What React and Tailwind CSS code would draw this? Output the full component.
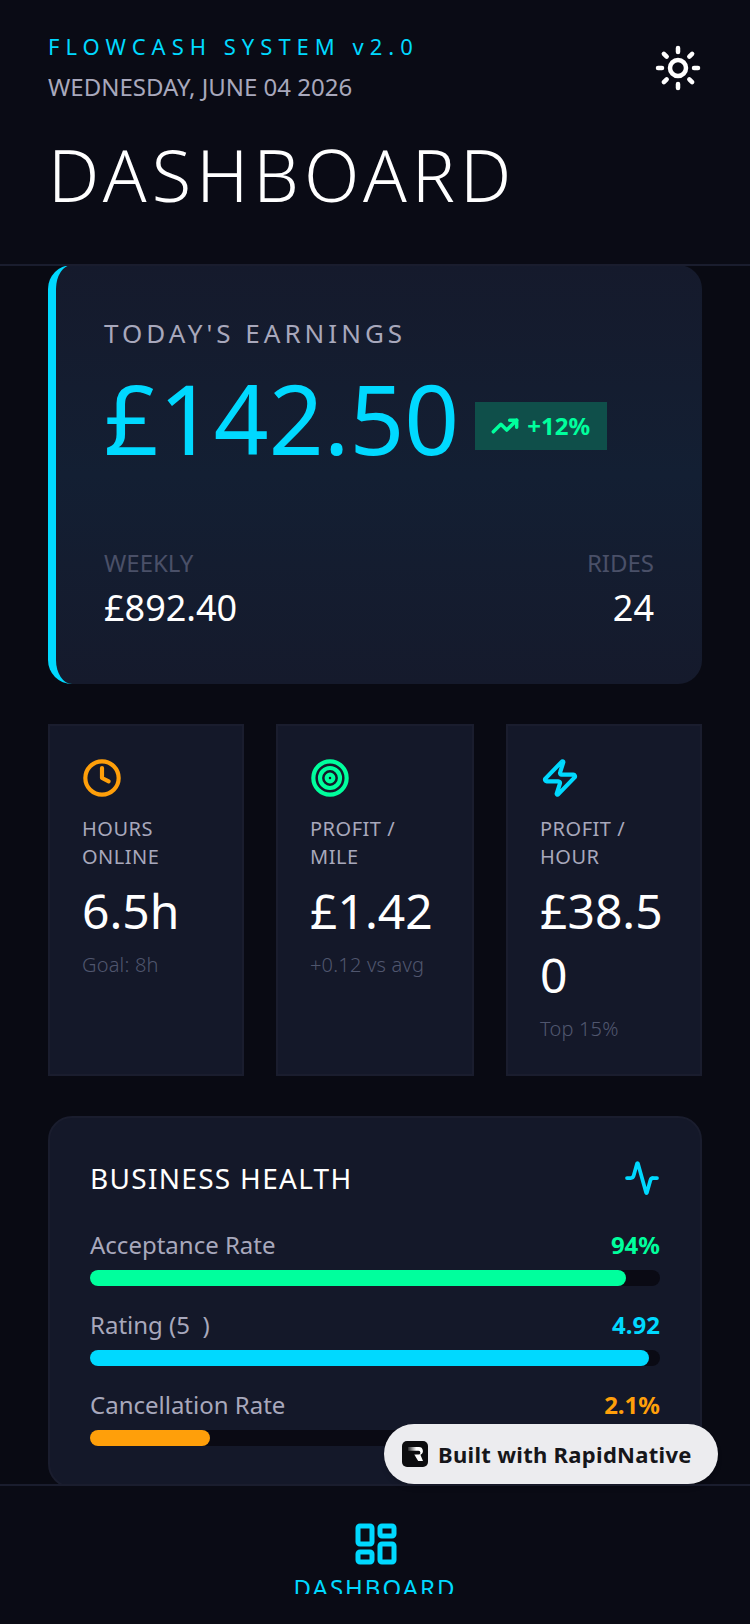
import React from 'react'
import { Sun, TrendingUp, Clock, Target, Zap, Activity, LayoutDashboard } from 'lucide-react'

const stats = [
    { Icon: Clock, color: 'text-[#ff9f0a]', label: 'HOURS ONLINE', value: '6.5h', sub: 'Goal: 8h', width: 'w-[196px]' },
    { Icon: Target, color: 'text-[#00ff9d]', label: 'PROFIT / MILE', value: '£1.42', sub: '+0.12 vs avg', width: 'w-[198px]' },
    { Icon: Zap, color: 'text-[#00d9ff]', label: 'PROFIT / HOUR', value: '£38.50', sub: 'Top 15%', width: 'w-[196px]' },
]

const metrics = [
    { label: 'Acceptance Rate', value: '94%', text: 'text-[#00ff9d]', bar: 'bg-[#00ff9d] w-[94%]' },
    { label: 'Rating (5\u00a0\u00a0)', value: '4.92', text: 'text-[#00d9ff]', bar: 'bg-[#00d9ff] w-[98%]' },
    { label: 'Cancellation Rate', value: '2.1%', text: 'text-[#ff9f0a]', bar: 'bg-[#ff9f0a] w-[21%]' },
]

const App = () => {
    return (
        <div className="relative flex h-[1624px] w-[750px] flex-col overflow-hidden bg-[#090a13] font-['Noto_Sans',sans-serif]">
            <header className="h-[266px] shrink-0 border-b-2 border-[#1a1d2e] bg-[#0a0b15] px-12 pt-[28px]">
                <div className="flex items-start justify-between">
                    <div>
                        <p className="text-[22px] leading-[36px] tracking-[6px] text-[#00d9ff]">FLOWCASH SYSTEM v2.0</p>
                        <p className="mt-[5px] text-[24px] leading-[36px] text-[#a8a8bc]">WEDNESDAY, JUNE 04 2026</p>
                    </div>
                    <Sun size={48} strokeWidth={2.25} className="mt-[16px] text-white" />
                </div>
                <h1 className="mt-[21px] text-[72px] leading-[96px] tracking-[5.1px] text-white font-light">DASHBOARD</h1>
            </header>

            <main className="flex-1 overflow-hidden px-12">
                <section className="-mt-[1px] h-[419px] rounded-3xl border-l-8 border-[#00d9ff] bg-linear-to-b from-[#151a2c] via-[#131f33] to-[#151a2c] p-12 pt-[48px]">
                    <p className="text-[26px] leading-[40px] tracking-[4px] text-[#a8a8bc]">TODAY'S EARNINGS</p>
                    <div className="mt-[9px] flex items-center gap-[16px]">
                        <span className="text-[96px] leading-[112px] text-[#00d9ff]">£142.50</span>
                        <div className="mt-[16px] flex h-[48px] w-[132px] items-center gap-[8px] bg-[#0f4f4a] px-4">
                            <TrendingUp size={28} strokeWidth={3} className="text-[#00ff9d]" />
                            <span className="text-[24px] font-bold text-[#00ff9d]">+12%</span>
                        </div>
                    </div>
                    <div className="mt-[71px] flex justify-between">
                        <div>
                            <p className="text-[24px] leading-[36px] text-[#4a5068]">WEEKLY</p>
                            <p className="mt-[3px] text-[36px] leading-[48px] text-white">£892.40</p>
                        </div>
                        <div className="text-right">
                            <p className="text-[24px] leading-[36px] text-[#4a5068]">RIDES</p>
                            <p className="mt-[3px] text-[36px] leading-[48px] text-white">24</p>
                        </div>
                    </div>
                </section>

                <section className="mt-[40px] flex gap-[32px]">
                    {stats.map(({ Icon, color, label, value, sub, width }) => (
                        <div key={label} className={`${width} h-[352px] border-2 border-[#1a1d2e] bg-[#141829] px-8 pt-8`}>
                            <Icon size={40} strokeWidth={2.5} className={color} />
                            <p className="mt-[17px] text-[20px] leading-[28px] tracking-[0.5px] text-[#a8a8bc]">{label}</p>
                            <p className="mt-[8px] text-[48px] leading-[64px] break-all text-white">{value}</p>
                            <p className="mt-[8px] text-[20px] leading-[28px] tracking-[0.2px] text-[#50566e] font-light">{sub}</p>
                        </div>
                    ))}
                </section>

                <section className="mt-[40px] h-[372px] rounded-3xl border-2 border-[#1a1d2e] bg-[#141829] px-[40px] pt-[40px]">
                    <div className="flex items-center justify-between">
                        <h2 className="text-[28px] leading-[40px] tracking-[1.3px] text-white">BUSINESS HEALTH</h2>
                        <Activity size={36} strokeWidth={2.5} className="text-[#00d9ff]" />
                    </div>
                    <div className="mt-[29px] flex flex-col gap-[21px]">
                        {metrics.map((m) => (
                            <div key={m.label}>
                                <div className="flex items-center justify-between">
                                    <span className="text-[24px] leading-[36px] text-[#a8a8bc]">{m.label}</span>
                                    <span className={`text-[24px] leading-[36px] font-bold ${m.text}`}>{m.value}</span>
                                </div>
                                <div className="mt-[7px] h-[16px] rounded-full bg-[#0a0a14]">
                                    <div className={`h-full rounded-full ${m.bar}`} />
                                </div>
                            </div>
                        ))}
                    </div>
                </section>
            </main>

            <footer className="flex h-[140px] shrink-0 flex-col items-center border-t-2 border-[#1a1d2e] bg-[#0a0b15] pt-[34px]">
                <LayoutDashboard size={48} strokeWidth={2.5} className="ml-[2px] text-[#00d9ff]" />
                <div className="mt-[4px] h-[22px] overflow-hidden">
                    <p className="text-[24px] leading-[32px] tracking-[2px] text-[#00d9ff]">DASHBOARD</p>
                </div>
            </footer>

            <div className="absolute top-[1424px] left-[384px] flex h-[60px] w-[334px] items-center gap-[10px] rounded-full bg-[#ececef] pl-[18px] shadow-md">
                <svg width="26" height="26" viewBox="0 0 26 26">
                    <defs>
                        <linearGradient id="rn" x1="0" x2="1" y1="0" y2="0">
                            <stop offset="0" stopColor="#2a2a2c" />
                            <stop offset="0.55" stopColor="#ffffff" />
                        </linearGradient>
                    </defs>
                    <rect width="26" height="26" rx="5" fill="#0d0d0f" />
                    <path d="M6 6h11a4 4 0 0 1 1.4 7.7L21 20h-4.8l-4-6.4H16.5a1.5 1.5 0 0 0 0-3.8H6z" fill="url(#rn)" />
                </svg>
                <span className="text-[22px] font-bold tracking-[0.3px] text-[#16161a]">Built with RapidNative</span>
            </div>
        </div>
    )
}

export default App
